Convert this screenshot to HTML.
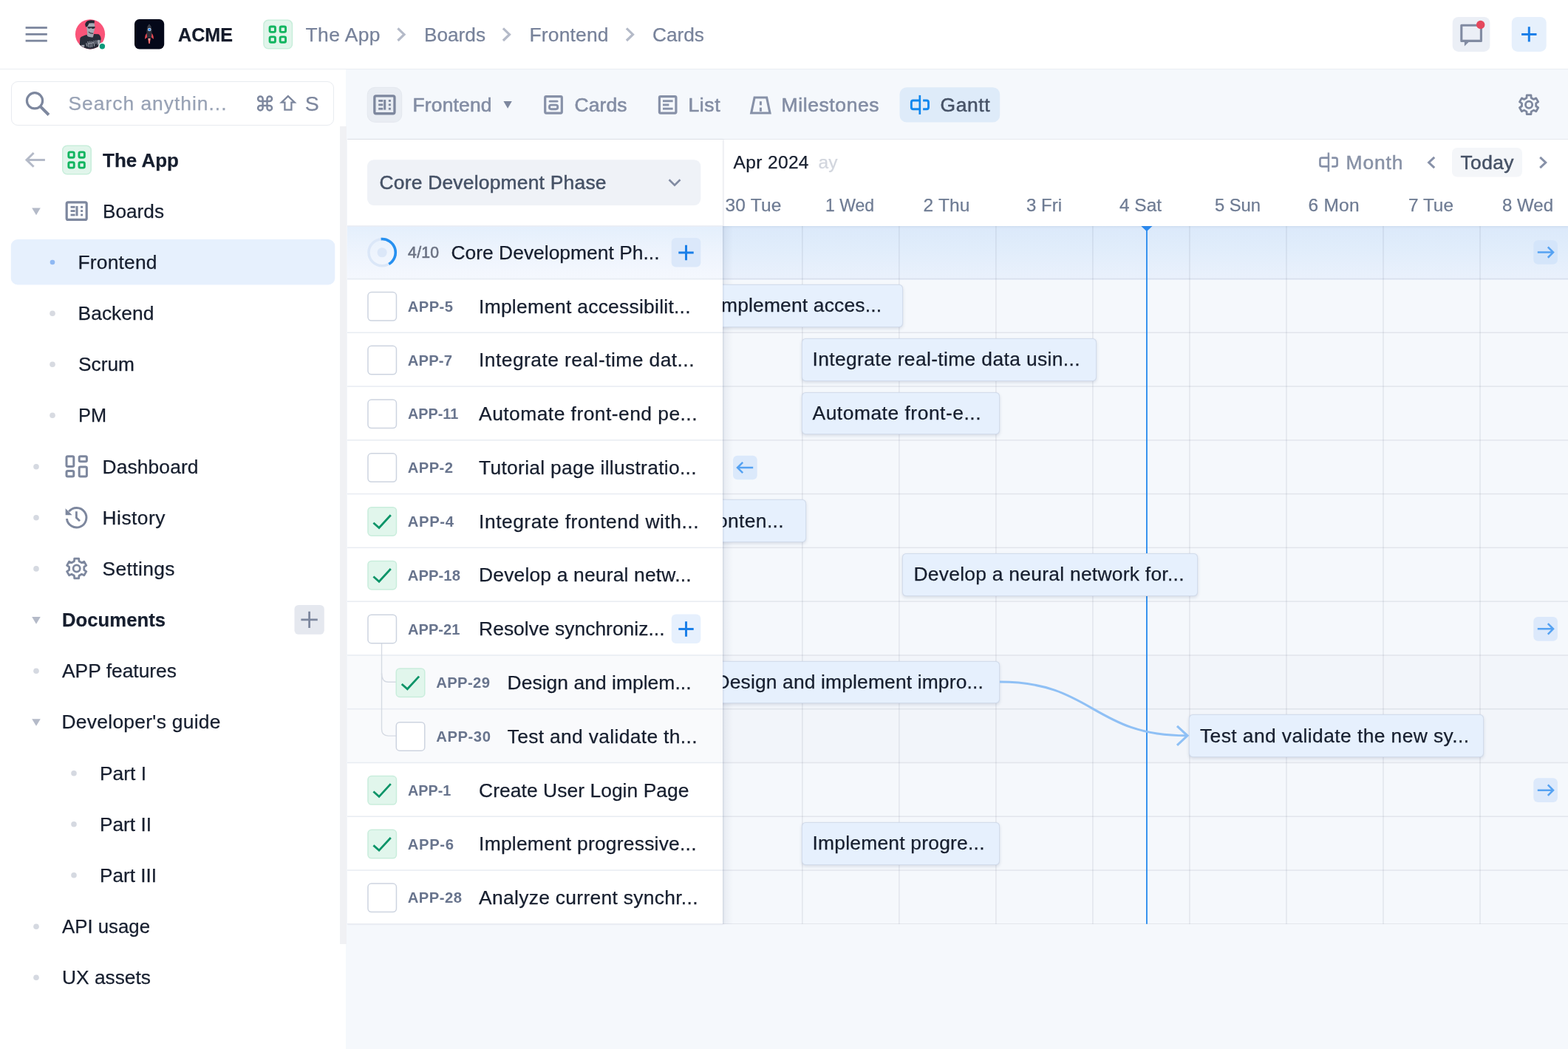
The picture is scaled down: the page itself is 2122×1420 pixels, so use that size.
<!DOCTYPE html>
<html lang="en"><head><meta charset="utf-8"><title>The App - Frontend - Gantt</title>
<style>
html,body{margin:0;padding:0;}
body{width:2122px;height:1420px;overflow:hidden;position:relative;background:#f5f8fc;font-family:'Liberation Sans',sans-serif;}
.t{position:absolute;white-space:pre;font-size:26px;line-height:40px;-webkit-text-stroke:0.25px currentColor;}
#root{position:absolute;left:0;top:0;width:2122px;height:1420px;will-change:transform;}
.a{position:absolute;}
svg{position:absolute;overflow:visible;}
</style></head><body><div id="root">
<nav aria-label="Sidebar">
<div style="position:absolute;left:0.00px;top:94.00px;width:468.00px;height:1326.00px;background:#fff;"></div>
<div style="position:absolute;left:460.00px;top:171.00px;width:8.50px;height:1107.00px;background:#f0f1f4;"></div>
<div style="position:absolute;left:15.30px;top:109.60px;width:436.40px;height:60.40px;box-sizing:border-box;border:1.5px solid #e8ebf0;border-radius:9px;background:#fff;"></div>
<svg width="2122" height="1420" viewBox="0 0 2122 1420" style="left:0;top:0" fill="none"><path d="M355.60 137.00 V133.75 A3.25 3.25 0 1 0 352.35 137.00 H355.60 M355.60 142.90 V146.15 A3.25 3.25 0 1 1 352.35 142.90 H355.60 M361.50 137.00 V133.75 A3.25 3.25 0 1 1 364.75 137.00 H361.50 M361.50 142.90 V146.15 A3.25 3.25 0 1 0 364.75 142.90 H361.50 M355.60 137.00 H361.50 V142.90 H355.60 Z" stroke="#7d879e" stroke-width="2.5"/><path d="M389.85 130.2 L398.7 138.6 H394.4 V148.6 H385.4 V138.6 H381 Z" stroke="#7d879e" stroke-width="2.3" stroke-linejoin="miter"/><circle cx="47" cy="136.3" r="10.6" stroke="#7d879e" stroke-width="3.2"/><path d="M54.6 144.2 L66 155.5" stroke="#7d879e" stroke-width="4"/><path d="M60.9 216.4 H36 M45.6 207 L36 216.4 L45.6 225.8" stroke="#b4bac8" stroke-width="3" stroke-linejoin="miter"/><rect x="84.75" y="197.25" width="38.5" height="38.5" rx="6" fill="#e1f5eb" stroke="#c8eedb" stroke-width="1.5"/><rect x="92.85" y="205.85" width="7.40" height="7.40" rx="1.8" stroke="#12b560" stroke-width="2.9"/><rect x="106.95" y="205.85" width="7.40" height="7.40" rx="1.8" stroke="#12b560" stroke-width="2.9"/><rect x="92.85" y="219.75" width="7.40" height="7.40" rx="1.8" stroke="#12b560" stroke-width="2.9"/><rect x="106.95" y="219.75" width="7.40" height="7.40" rx="1.8" stroke="#12b560" stroke-width="2.9"/><path d="M43.20 281.45 h11.6 l-5.80 9.7 Z" fill="#b4bac8"/><rect x="90.20" y="273.80" width="27.00" height="23.60" rx="2" stroke="#7d879e" stroke-width="3.2"/><rect x="95.55" y="278.84" width="6.04" height="2.8" fill="#7d879e"/><rect x="109.14" y="278.84" width="3.02" height="2.8" fill="#7d879e"/><rect x="95.55" y="284.20" width="6.04" height="2.8" fill="#7d879e"/><rect x="109.14" y="284.20" width="3.02" height="2.8" fill="#7d879e"/><rect x="95.55" y="289.56" width="6.04" height="2.8" fill="#7d879e"/><rect x="109.14" y="289.56" width="3.02" height="2.8" fill="#7d879e"/><rect x="102.50" y="278.90" width="3" height="13.40" fill="#7d879e"/><rect x="14.8" y="324" width="438.5" height="61.5" rx="9" fill="#e6f0fd"/><circle cx="71" cy="355" r="3.3" fill="#8fb9f3"/><circle cx="71" cy="424.3" r="3.8" fill="#d7dae1"/><circle cx="71" cy="493.3" r="3.8" fill="#d7dae1"/><circle cx="71" cy="562.3" r="3.8" fill="#d7dae1"/><circle cx="49" cy="631.7" r="3.8" fill="#d5d9e1"/><circle cx="49" cy="700.8000000000001" r="3.8" fill="#d5d9e1"/><circle cx="49" cy="769.9000000000001" r="3.8" fill="#d5d9e1"/><circle cx="49" cy="908.2" r="3.8" fill="#d5d9e1"/><circle cx="49" cy="1254.2" r="3.8" fill="#d5d9e1"/><circle cx="49" cy="1323.2" r="3.8" fill="#d5d9e1"/><circle cx="100" cy="1046.8" r="3.8" fill="#d5d9e1"/><circle cx="100" cy="1115.8" r="3.8" fill="#d5d9e1"/><circle cx="100" cy="1184.8" r="3.8" fill="#d5d9e1"/><path d="M43.20 834.95 h11.6 l-5.80 9.7 Z" fill="#b4bac8"/><path d="M43.20 973.15 h11.6 l-5.80 9.7 Z" fill="#b4bac8"/><rect x="90.00" y="617.80" width="9.80" height="13.70" rx="1.8" stroke="#7d879e" stroke-width="3"/><rect x="107.20" y="617.80" width="10.20" height="7.00" rx="1.8" stroke="#7d879e" stroke-width="3"/><rect x="90.00" y="637.60" width="9.80" height="7.40" rx="1.8" stroke="#7d879e" stroke-width="3"/><rect x="107.20" y="632.00" width="10.20" height="13.00" rx="1.8" stroke="#7d879e" stroke-width="3"/><path d="M93.22 692.41 A13.3 13.3 0 1 1 90.40 702.10" stroke="#7d879e" stroke-width="3"/><path d="M88.6 688.3 V697.2 H97.6 Z" fill="#7d879e"/><path d="M103.4 692.3 V700.8 L108 705.2" stroke="#7d879e" stroke-width="2.8"/><path d="M100.43 759.73 L100.73 756.12 L106.67 756.12 L106.97 759.73 L110.52 761.79 L113.80 760.24 L116.77 765.38 L113.79 767.45 L113.79 771.55 L116.77 773.62 L113.80 778.76 L110.52 777.21 L106.97 779.27 L106.67 782.88 L100.73 782.88 L100.43 779.27 L96.88 777.21 L93.60 778.76 L90.63 773.62 L93.61 771.55 L93.61 767.45 L90.63 765.38 L93.60 760.24 L96.88 761.79Z" stroke="#7d879e" stroke-width="2.8" stroke-linejoin="round"/><circle cx="103.7" cy="769.5" r="4.6" stroke="#7d879e" stroke-width="2.8"/><rect x="398.5" y="819" width="40.3" height="39.8" rx="5.5" fill="#e5e8ef"/><path d="M407.40 838.90 h22.4 M418.60 827.70 v22.4" stroke="#7d879e" stroke-width="2.8"/></svg>
<div class="t" style="top:120.00px;font-size:26.4px;line-height:40px;color:#98a2b5;letter-spacing:0.997px;left:92.50px;">Search anythin...</div>
<div class="t" style="top:120.00px;font-size:28.5px;line-height:40px;color:#7d879e;letter-spacing:0.000px;left:412.80px;">S</div>
<div class="t" style="top:197.00px;font-size:26.4px;line-height:40px;color:#161e2e;letter-spacing:0.000px;transform:scaleX(0.9849);transform-origin:0 0;font-weight:700;left:138.50px;">The App</div>
<div class="t" style="top:266.00px;font-size:26.4px;line-height:40px;color:#161e2e;letter-spacing:0.000px;transform:scaleX(0.9925);transform-origin:0 0;left:138.50px;">Boards</div>
<div class="t" style="top:335.00px;font-size:26.4px;line-height:40px;color:#161e2e;letter-spacing:0.194px;left:105.50px;">Frontend</div>
<div class="t" style="top:404.00px;font-size:26.4px;line-height:40px;color:#161e2e;letter-spacing:0.049px;left:105.50px;">Backend</div>
<div class="t" style="top:473.00px;font-size:26.4px;line-height:40px;color:#161e2e;letter-spacing:0.000px;transform:scaleX(0.9967);transform-origin:0 0;left:105.50px;">Scrum</div>
<div class="t" style="top:542.00px;font-size:26.4px;line-height:40px;color:#161e2e;letter-spacing:0.000px;transform:scaleX(0.9597);transform-origin:0 0;left:105.50px;">PM</div>
<div class="t" style="top:612.00px;font-size:26.4px;line-height:40px;color:#161e2e;letter-spacing:0.111px;left:138.50px;">Dashboard</div>
<div class="t" style="top:681.00px;font-size:26.4px;line-height:40px;color:#161e2e;letter-spacing:0.479px;left:138.50px;">History</div>
<div class="t" style="top:750.00px;font-size:26.4px;line-height:40px;color:#161e2e;letter-spacing:0.377px;left:138.50px;">Settings</div>
<div class="t" style="top:819.00px;font-size:26.4px;line-height:40px;color:#161e2e;letter-spacing:0.000px;transform:scaleX(0.9741);transform-origin:0 0;font-weight:700;left:83.50px;">Documents</div>
<div class="t" style="top:888.00px;font-size:26.4px;line-height:40px;color:#161e2e;letter-spacing:0.000px;transform:scaleX(0.9998);transform-origin:0 0;left:83.50px;">APP features</div>
<div class="t" style="top:957.00px;font-size:26.4px;line-height:40px;color:#161e2e;letter-spacing:0.285px;left:83.50px;">Developer&#x27;s guide</div>
<div class="t" style="top:1027.00px;font-size:26.4px;line-height:40px;color:#161e2e;letter-spacing:0.000px;transform:scaleX(0.9988);transform-origin:0 0;left:134.50px;">Part I</div>
<div class="t" style="top:1096.00px;font-size:26.4px;line-height:40px;color:#161e2e;letter-spacing:0.000px;transform:scaleX(0.9942);transform-origin:0 0;left:134.50px;">Part II</div>
<div class="t" style="top:1165.00px;font-size:26.4px;line-height:40px;color:#161e2e;letter-spacing:0.000px;transform:scaleX(0.9906);transform-origin:0 0;left:134.50px;">Part III</div>
<div class="t" style="top:1234.00px;font-size:26.4px;line-height:40px;color:#161e2e;letter-spacing:0.000px;transform:scaleX(0.9772);transform-origin:0 0;left:83.50px;">API usage</div>
<div class="t" style="top:1303.00px;font-size:26.4px;line-height:40px;color:#161e2e;letter-spacing:0.000px;transform:scaleX(0.9978);transform-origin:0 0;left:83.50px;">UX assets</div>
</nav>
<header>
<div style="position:absolute;left:0.00px;top:0.00px;width:2122.00px;height:92.60px;background:#fff;border-bottom:1.5px solid #eaedf2;"></div>
<svg width="2122" height="1420" viewBox="0 0 2122 1420" style="left:0;top:0" fill="none"><rect x="34.6" y="36.1" width="29.2" height="2.8" fill="#7d879e"/><rect x="34.6" y="45.0" width="29.2" height="2.8" fill="#7d879e"/><rect x="34.6" y="53.800000000000004" width="29.2" height="2.8" fill="#7d879e"/><clipPath id="av"><circle cx="122" cy="46.3" r="20.1"/></clipPath><circle cx="122" cy="46.3" r="20.1" fill="#fa5479"/><g clip-path="url(#av)"><g transform="translate(95,20) scale(0.03873)"><path d="M330 1060 L345 820 Q360 770 450 745 L570 700 L640 760 L790 780 L830 670 L990 680 Q1060 720 1075 830 L1060 960 L1000 1250 L330 1250 Z" fill="#272c39"/><path d="M590 560 L820 600 L800 780 Q700 800 600 750 Z" fill="#a3a8b2"/><path d="M560 300 L840 280 L860 420 L840 560 Q800 650 740 650 Q640 640 590 560 Z" fill="#a6abb5"/><path d="M640 580 Q720 650 810 640 L800 670 Q700 680 640 610 Z" fill="#3a3f4b"/><path d="M520 340 Q530 250 620 205 Q720 175 850 200 L845 300 Q760 285 660 300 L610 400 L545 435 Z" fill="#222733"/><path d="M600 420 L870 410 L865 450 Q840 495 780 490 Q740 485 730 450 Q700 490 650 485 Q610 475 600 420 Z" fill="#2b303c"/><path d="M940 900 Q1000 860 1050 890 L1040 1000 L960 1060 Z" fill="#a3a8b2"/><path d="M380 1060 L500 1050 L490 1130 L420 1120 Z" fill="#a3a8b2"/><path d="M560 990 l30 110 M620 930 l20 200 M690 920 l10 220 M760 920 l0 210 M830 900 l10 200 M900 890 l0 130 M640 1010 l200 -40" stroke="#9a9fab" stroke-width="30" fill="none"/></g></g><circle cx="138.4" cy="62.7" r="5.3" fill="#fff"/><circle cx="138.4" cy="62.7" r="3.7" fill="#0b9a7b"/><rect x="182" y="26" width="40.2" height="40.4" rx="6.5" fill="#040819"/><path d="M202 32.5 C205.5 36 206 41 205.5 47 L204.8 51.5 H199.2 L198.5 47 C198 41 198.5 36 202 32.5 Z" fill="#2b2f3a"/><path d="M202 32.5 C203.5 34 204.3 35.5 204.8 37 H199.2 C199.7 35.5 200.5 34 202 32.5Z" fill="#3a3e4a"/><circle cx="202.2" cy="40" r="2.3" fill="#dfe7f2"/><circle cx="202.2" cy="40" r="1.5" fill="#1d84f0"/><path d="M198.6 45 C196.5 47 196 50 196.3 53 L199 50.5 Z" fill="#ef4b55"/><path d="M205.4 45 C207.5 47 208 50 207.7 53 L205 50.5 Z" fill="#ef4b55"/><path d="M200.2 52 H203.8 L202.8 58.5 L202 59.5 L201.2 58.5 Z" fill="#f26a6a"/><path d="M201.3 52 H202.7 L202 56 Z" fill="#ffd9d4"/><rect x="356.95" y="27.35" width="38.5" height="38.5" rx="6" fill="#e1f5eb" stroke="#c8eedb" stroke-width="1.5"/><rect x="365.05" y="35.95" width="7.40" height="7.40" rx="1.8" stroke="#12b560" stroke-width="2.9"/><rect x="379.15" y="35.95" width="7.40" height="7.40" rx="1.8" stroke="#12b560" stroke-width="2.9"/><rect x="365.05" y="49.85" width="7.40" height="7.40" rx="1.8" stroke="#12b560" stroke-width="2.9"/><rect x="379.15" y="49.85" width="7.40" height="7.40" rx="1.8" stroke="#12b560" stroke-width="2.9"/><path d="M538.40 38.40 L547.00 46.70 L538.40 55.00" stroke="#b4bac8" stroke-width="3.2" stroke-linejoin="miter"/><path d="M680.90 38.40 L689.50 46.70 L680.90 55.00" stroke="#b4bac8" stroke-width="3.2" stroke-linejoin="miter"/><path d="M847.90 38.40 L856.50 46.70 L847.90 55.00" stroke="#b4bac8" stroke-width="3.2" stroke-linejoin="miter"/><rect x="1965.7" y="22.9" width="50.7" height="47" rx="8" fill="#ebeff6"/><path d="M1977.8 34.3 H2004.4 V55.4 H1984.5 L1982.3 55.4 L1977.8 55.4 Z" stroke="#818ba2" stroke-width="3.1" stroke-linejoin="round"/><path d="M1981.9 56 H1988.6 L1981.9 62.6 Z" fill="#818ba2"/><circle cx="2003.7" cy="33.5" r="5.7" fill="#e5485d"/><rect x="2045.8" y="22.9" width="46.9" height="47" rx="8" fill="#e6f0fc"/><path d="M2059.10 46.40 h20.4 M2069.30 36.20 v20.4" stroke="#1a7fe8" stroke-width="3.0"/></svg>
<div class="t" style="top:27.00px;font-size:26.4px;line-height:40px;color:#141b2b;letter-spacing:0.000px;transform:scaleX(0.9523);transform-origin:0 0;font-weight:700;left:240.50px;">ACME</div>
<div class="t" style="top:27.00px;font-size:26.4px;line-height:40px;color:#77829a;letter-spacing:0.448px;left:413.50px;">The App</div>
<div class="t" style="top:27.00px;font-size:26.4px;line-height:40px;color:#77829a;letter-spacing:0.000px;transform:scaleX(0.9925);transform-origin:0 0;left:573.50px;">Boards</div>
<div class="t" style="top:27.00px;font-size:26.4px;line-height:40px;color:#77829a;letter-spacing:0.194px;left:716.50px;">Frontend</div>
<div class="t" style="top:27.00px;font-size:26.4px;line-height:40px;color:#77829a;letter-spacing:0.000px;transform:scaleX(0.9942);transform-origin:0 0;left:882.50px;">Cards</div>
</header>
<main>
<section aria-label="Views">
<div style="position:absolute;left:470.00px;top:187.50px;width:1652.00px;height:1.50px;background:#e6e9ee;"></div>
<svg width="2122" height="1420" viewBox="0 0 2122 1420" style="left:0;top:0" fill="none"><rect x="497.2" y="118.4" width="46.5" height="46.9" rx="10" fill="#e9edf3" stroke="#e3e7ee" stroke-width="1"/><rect x="506.85" y="129.95" width="27.10" height="23.80" rx="2" stroke="#7d879e" stroke-width="3.3"/><rect x="512.19" y="135.03" width="6.08" height="2.8" fill="#7d879e"/><rect x="525.87" y="135.03" width="3.04" height="2.8" fill="#7d879e"/><rect x="512.19" y="140.45" width="6.08" height="2.8" fill="#7d879e"/><rect x="525.87" y="140.45" width="3.04" height="2.8" fill="#7d879e"/><rect x="512.19" y="145.87" width="6.08" height="2.8" fill="#7d879e"/><rect x="525.87" y="145.87" width="3.04" height="2.8" fill="#7d879e"/><rect x="519.20" y="135.08" width="3" height="13.55" fill="#7d879e"/><path d="M681.40 137.05 h11.4 l-5.70 9.7 Z" fill="#7d879e"/><rect x="737.7" y="130.7" width="22.6" height="22.4" rx="1.5" stroke="#8791a8" stroke-width="3.2"/><rect x="742.7" y="135.7" width="12.8" height="2.9" rx="1.4" fill="#8791a8"/><rect x="743.5" y="142.1" width="11.2" height="5.6" rx="2.4" stroke="#8791a8" stroke-width="2.9"/><rect x="892.4" y="130.7" width="22.5" height="22.4" rx="1.5" stroke="#8791a8" stroke-width="3.2"/><rect x="897.0" y="135.29999999999998" width="13.6" height="2.9" fill="#8791a8"/><rect x="897.0" y="140.5" width="8.4" height="2.9" fill="#8791a8"/><rect x="897.0" y="145.7" width="13.6" height="2.9" fill="#8791a8"/><path d="M1021.0999999999999 132.0 H1037.6 L1042.0 153.0 H1016.6999999999999 Z" stroke="#8791a8" stroke-width="3.1" stroke-linejoin="miter"/><rect x="1027.8999999999999" y="137.20000000000002" width="3" height="5.2" fill="#8791a8"/><rect x="1027.8999999999999" y="145.6" width="3" height="5.2" fill="#8791a8"/><rect x="1217.5" y="118.3" width="135.7" height="47.2" rx="9.5" fill="#deebf9"/><path d="M1244.80 128.90 V154.90" stroke="#1288ee" stroke-width="2.6999999999999997"/><path d="M1244.80 136.05 H1235.85 Q1233.35 136.05 1233.35 138.55 V145.25 Q1233.35 147.75 1235.85 147.75 H1244.80" stroke="#1288ee" stroke-width="2.9"/><path d="M1249.10 136.05 H1254.00 Q1256.50 136.05 1256.50 138.55 V145.25 Q1256.50 147.75 1254.00 147.75 H1249.10" stroke="#1288ee" stroke-width="2.9"/><path d="M2065.99 132.51 L2066.24 128.91 L2071.96 128.91 L2072.21 132.51 L2075.59 134.46 L2078.83 132.88 L2081.69 137.83 L2078.70 139.85 L2078.70 143.75 L2081.69 145.77 L2078.83 150.72 L2075.59 149.14 L2072.21 151.09 L2071.96 154.69 L2066.24 154.69 L2065.99 151.09 L2062.61 149.14 L2059.37 150.72 L2056.51 145.77 L2059.50 143.75 L2059.50 139.85 L2056.51 137.83 L2059.37 132.88 L2062.61 134.46Z" stroke="#7d879e" stroke-width="2.8" stroke-linejoin="round"/><circle cx="2069.1" cy="141.8" r="4.6" stroke="#7d879e" stroke-width="2.8"/></svg>
<div class="t" style="top:122.00px;font-size:26.4px;line-height:40px;color:#838da4;letter-spacing:0.194px;left:558.50px;-webkit-text-stroke:0.6px #838da4;">Frontend</div>
<div class="t" style="top:122.00px;font-size:26.4px;line-height:40px;color:#838da4;letter-spacing:0.148px;left:777.50px;-webkit-text-stroke:0.6px #838da4;">Cards</div>
<div class="t" style="top:122.00px;font-size:26.4px;line-height:40px;color:#838da4;letter-spacing:0.641px;left:931.50px;-webkit-text-stroke:0.6px #838da4;">List</div>
<div class="t" style="top:122.00px;font-size:26.4px;line-height:40px;color:#838da4;letter-spacing:0.649px;left:1057.50px;-webkit-text-stroke:0.6px #838da4;">Milestones</div>
<div class="t" style="top:122.00px;font-size:26.4px;line-height:40px;color:#465266;letter-spacing:0.613px;left:1272.50px;-webkit-text-stroke:0.5px #465266;">Gantt</div>
</section>
<section aria-label="Gantt chart">
<div class="a" style="left:978px;top:189px;width:1144px;height:1061.80px;overflow:hidden;">
<div class="a" style="left:-978px;top:-189px;width:2122px;height:1420px;">
<div style="position:absolute;left:978.00px;top:306.00px;width:1144.00px;height:944.80px;background:#f5f8fc;"></div>
<div style="position:absolute;left:978.00px;top:306.00px;width:1144.00px;height:72.78px;background:linear-gradient(180deg,#dbe9fa 0%,#e1edfb 45%,#eaf1fc 100%);"></div>
<div style="position:absolute;left:978.00px;top:886.93px;width:1144.00px;height:145.55px;background:#f2f5fa;"></div>
<svg width="2122" height="1420" viewBox="0 0 2122 1420" style="left:0;top:0" fill="none"><rect x="978.00" y="376.75" width="1144.00" height="1.5" fill="rgba(80,90,115,0.115)"/><rect x="978.00" y="449.52" width="1144.00" height="1.5" fill="rgba(80,90,115,0.115)"/><rect x="978.00" y="522.30" width="1144.00" height="1.5" fill="rgba(80,90,115,0.115)"/><rect x="978.00" y="595.08" width="1144.00" height="1.5" fill="rgba(80,90,115,0.115)"/><rect x="978.00" y="667.85" width="1144.00" height="1.5" fill="rgba(80,90,115,0.115)"/><rect x="978.00" y="740.62" width="1144.00" height="1.5" fill="rgba(80,90,115,0.115)"/><rect x="978.00" y="813.40" width="1144.00" height="1.5" fill="rgba(80,90,115,0.115)"/><rect x="978.00" y="886.18" width="1144.00" height="1.5" fill="rgba(80,90,115,0.115)"/><rect x="978.00" y="958.95" width="1144.00" height="1.5" fill="rgba(80,90,115,0.115)"/><rect x="978.00" y="1031.72" width="1144.00" height="1.5" fill="rgba(80,90,115,0.115)"/><rect x="978.00" y="1104.50" width="1144.00" height="1.5" fill="rgba(80,90,115,0.115)"/><rect x="978.00" y="1177.28" width="1144.00" height="1.5" fill="rgba(80,90,115,0.115)"/><rect x="978.00" y="1250.05" width="1144.00" height="1.5" fill="rgba(80,90,115,0.115)"/><rect x="1085.05" y="306.00" width="1.5" height="944.80" fill="rgba(80,90,115,0.115)"/><rect x="1216.08" y="306.00" width="1.5" height="944.80" fill="rgba(80,90,115,0.115)"/><rect x="1347.11" y="306.00" width="1.5" height="944.80" fill="rgba(80,90,115,0.115)"/><rect x="1478.14" y="306.00" width="1.5" height="944.80" fill="rgba(80,90,115,0.115)"/><rect x="1609.17" y="306.00" width="1.5" height="944.80" fill="rgba(80,90,115,0.115)"/><rect x="1740.20" y="306.00" width="1.5" height="944.80" fill="rgba(80,90,115,0.115)"/><rect x="1871.23" y="306.00" width="1.5" height="944.80" fill="rgba(80,90,115,0.115)"/><rect x="2002.26" y="306.00" width="1.5" height="944.80" fill="rgba(80,90,115,0.115)"/><rect x="1551.0" y="306.00" width="1.9" height="944.80" fill="#2f8eee"/><path d="M1544.3 306.00 H1559.5 L1551.9 313.20 Z" fill="#2a8af0"/></svg>
<div style="position:absolute;left:978.00px;top:306.00px;width:14.00px;height:944.80px;background:linear-gradient(90deg,rgba(100,116,150,0.10),rgba(100,116,150,0));"></div>
<div style="position:absolute;left:953.60px;top:385.19px;width:268.10px;height:57.60px;box-sizing:border-box;background:#e6f0fd;border:1.2px solid rgba(110,125,155,0.17);border-radius:5.5px;box-shadow:0 2px 4px rgba(50,70,110,0.15),0 0 1px rgba(50,70,110,0.08);"></div>
<div style="position:absolute;left:1084.60px;top:457.96px;width:399.60px;height:57.60px;box-sizing:border-box;background:#e6f0fd;border:1.2px solid rgba(110,125,155,0.17);border-radius:5.5px;box-shadow:0 2px 4px rgba(50,70,110,0.15),0 0 1px rgba(50,70,110,0.08);"></div>
<div style="position:absolute;left:1084.60px;top:530.74px;width:268.60px;height:57.60px;box-sizing:border-box;background:#e6f0fd;border:1.2px solid rgba(110,125,155,0.17);border-radius:5.5px;box-shadow:0 2px 4px rgba(50,70,110,0.15),0 0 1px rgba(50,70,110,0.08);"></div>
<div style="position:absolute;left:822.60px;top:676.29px;width:268.20px;height:57.60px;box-sizing:border-box;background:#e6f0fd;border:1.2px solid rgba(110,125,155,0.17);border-radius:5.5px;box-shadow:0 2px 4px rgba(50,70,110,0.15),0 0 1px rgba(50,70,110,0.08);"></div>
<div style="position:absolute;left:1221.20px;top:749.06px;width:399.70px;height:57.60px;box-sizing:border-box;background:#e6f0fd;border:1.2px solid rgba(110,125,155,0.17);border-radius:5.5px;box-shadow:0 2px 4px rgba(50,70,110,0.15),0 0 1px rgba(50,70,110,0.08);"></div>
<div style="position:absolute;left:953.60px;top:894.61px;width:399.60px;height:57.60px;box-sizing:border-box;background:#e6f0fd;border:1.2px solid rgba(110,125,155,0.17);border-radius:5.5px;box-shadow:0 2px 4px rgba(50,70,110,0.15),0 0 1px rgba(50,70,110,0.08);"></div>
<div style="position:absolute;left:1609.00px;top:967.39px;width:399.20px;height:57.60px;box-sizing:border-box;background:#e6f0fd;border:1.2px solid rgba(110,125,155,0.17);border-radius:5.5px;box-shadow:0 2px 4px rgba(50,70,110,0.15),0 0 1px rgba(50,70,110,0.08);"></div>
<div style="position:absolute;left:1084.60px;top:1112.94px;width:268.60px;height:57.60px;box-sizing:border-box;background:#e6f0fd;border:1.2px solid rgba(110,125,155,0.17);border-radius:5.5px;box-shadow:0 2px 4px rgba(50,70,110,0.15),0 0 1px rgba(50,70,110,0.08);"></div>
<svg width="2122" height="1420" viewBox="0 0 2122 1420" style="left:0;top:0" fill="none"><path d="M1353 923.01 C1479 923.01 1479 995.79 1606 995.79" stroke="#8fc0f5" stroke-width="3.1"/><path d="M1593 982.79 L1607 995.79 L1593 1008.79" stroke="#8fc0f5" stroke-width="3.1"/><rect x="2075.3" y="325.25" width="32.6" height="32.6" rx="6" fill="#d4e5fa"/><path d="M2080.80 341.55 H2102.00 M2094.80 334.35 L2102.00 341.55 L2094.80 348.75" stroke="#55a2f2" stroke-width="2.5"/><rect x="2075.3" y="835.04" width="32.6" height="32.6" rx="6" fill="#dce9fb"/><path d="M2080.80 851.34 H2102.00 M2094.80 844.14 L2102.00 851.34 L2094.80 858.54" stroke="#55a2f2" stroke-width="2.5"/><rect x="2075.3" y="1053.36" width="32.6" height="32.6" rx="6" fill="#dce9fb"/><path d="M2080.80 1069.66 H2102.00 M2094.80 1062.46 L2102.00 1069.66 L2094.80 1076.86" stroke="#55a2f2" stroke-width="2.5"/><rect x="992" y="616.71" width="32.7" height="32.6" rx="6" fill="#dbe9fb"/><path d="M1019.20 633.01 H998.00 M1005.20 625.81 L998.00 633.01 L1005.20 640.21" stroke="#55a2f2" stroke-width="2.5"/></svg>
<div class="t" style="top:393.44px;font-size:26.4px;line-height:40px;color:#161e2e;letter-spacing:0.183px;left:968.50px;">Implement acces...</div>
<div class="t" style="top:466.21px;font-size:26.4px;line-height:40px;color:#161e2e;letter-spacing:0.368px;left:1099.50px;">Integrate real-time data usin...</div>
<div class="t" style="top:538.99px;font-size:26.4px;line-height:40px;color:#161e2e;letter-spacing:0.524px;left:1099.50px;">Automate front-e...</div>
<div class="t" style="top:684.54px;font-size:26.4px;line-height:40px;color:#161e2e;letter-spacing:0.396px;left:837.50px;">Integrate fronten...</div>
<div class="t" style="top:757.31px;font-size:26.4px;line-height:40px;color:#161e2e;letter-spacing:0.269px;left:1236.50px;">Develop a neural network for...</div>
<div class="t" style="top:902.86px;font-size:26.4px;line-height:40px;color:#161e2e;letter-spacing:0.157px;left:968.50px;">Design and implement impro...</div>
<div class="t" style="top:975.64px;font-size:26.4px;line-height:40px;color:#161e2e;letter-spacing:0.417px;left:1624.00px;">Test and validate the new sy...</div>
<div class="t" style="top:1121.19px;font-size:26.4px;line-height:40px;color:#161e2e;letter-spacing:0.232px;left:1099.50px;">Implement progre...</div>
<div style="position:absolute;left:978.00px;top:189.00px;width:1144.00px;height:117.00px;background:#fff;box-shadow:0 1px 3px rgba(60,80,120,0.10);"></div>
<svg width="2122" height="1420" viewBox="0 0 2122 1420" style="left:0;top:0" fill="none"><path d="M1797.90 206.50 V232.50" stroke="#8791a8" stroke-width="2.5"/><path d="M1797.90 213.65 H1788.95 Q1786.45 213.65 1786.45 216.15 V222.85 Q1786.45 225.35 1788.95 225.35 H1797.90" stroke="#8791a8" stroke-width="2.7"/><path d="M1802.20 213.65 H1807.10 Q1809.60 213.65 1809.60 216.15 V222.85 Q1809.60 225.35 1807.10 225.35 H1802.20" stroke="#8791a8" stroke-width="2.7"/><rect x="1965" y="200" width="95" height="39.5" rx="7" fill="#f4f6f9"/><path d="M1941.2 212.8 L1933.6 220 L1941.2 227.2" stroke="#8791a8" stroke-width="3"/><path d="M2084.2 212.8 L2091.8 220 L2084.2 227.2" stroke="#8791a8" stroke-width="3"/></svg>
<div class="t" style="top:200.00px;font-size:24.5px;line-height:40px;color:#161e2e;letter-spacing:0.366px;left:992.50px;">Apr 2024</div>
<div class="t" style="top:200.00px;font-size:24.5px;line-height:40px;color:#d2d6de;letter-spacing:0.000px;left:1107.50px;">ay</div>
<div class="t" style="top:258.00px;font-size:24.5px;line-height:40px;color:#6e7b93;letter-spacing:0.212px;left:981.50px;">30 Tue</div>
<div class="t" style="top:258.00px;font-size:24.5px;line-height:40px;color:#6e7b93;letter-spacing:0.000px;transform:scaleX(0.9378);transform-origin:0 0;left:1116.50px;">1 Wed</div>
<div class="t" style="top:258.00px;font-size:24.5px;line-height:40px;color:#6e7b93;letter-spacing:0.195px;left:1249.50px;">2 Thu</div>
<div class="t" style="top:258.00px;font-size:24.5px;line-height:40px;color:#6e7b93;letter-spacing:0.000px;transform:scaleX(0.9796);transform-origin:0 0;left:1388.50px;">3 Fri</div>
<div class="t" style="top:258.00px;font-size:24.5px;line-height:40px;color:#6e7b93;letter-spacing:0.000px;transform:scaleX(0.9962);transform-origin:0 0;left:1514.50px;">4 Sat</div>
<div class="t" style="top:258.00px;font-size:24.5px;line-height:40px;color:#6e7b93;letter-spacing:0.000px;transform:scaleX(0.9683);transform-origin:0 0;left:1643.50px;">5 Sun</div>
<div class="t" style="top:258.00px;font-size:24.5px;line-height:40px;color:#6e7b93;letter-spacing:0.227px;left:1770.50px;">6 Mon</div>
<div class="t" style="top:258.00px;font-size:24.5px;line-height:40px;color:#6e7b93;letter-spacing:0.000px;transform:scaleX(0.9949);transform-origin:0 0;left:1905.50px;">7 Tue</div>
<div class="t" style="top:258.00px;font-size:24.5px;line-height:40px;color:#6e7b93;letter-spacing:0.000px;transform:scaleX(0.9805);transform-origin:0 0;left:2032.50px;">8 Wed</div>
<div class="t" style="top:200.00px;font-size:26.4px;line-height:40px;color:#8892a6;letter-spacing:0.910px;left:1821.50px;-webkit-text-stroke:0.5px #8892a6;">Month</div>
<div class="t" style="top:200.00px;font-size:26.4px;line-height:40px;color:#465266;letter-spacing:0.395px;left:1976.50px;-webkit-text-stroke:0.5px #465266;">Today</div>
</div></div>
<div style="position:absolute;left:470.00px;top:189.00px;width:508.00px;height:1061.80px;background:#fff;box-shadow:1px 0 2px rgba(60,80,120,0.16);"></div>
<div style="position:absolute;left:470.00px;top:306.00px;width:508.00px;height:72.78px;background:linear-gradient(180deg,#e4effc 0%,#eef4fd 50%,#f5f8fe 100%);"></div>
<div style="position:absolute;left:470.00px;top:886.93px;width:508.00px;height:145.55px;background:#f9fafc;"></div>
<svg width="2122" height="1420" viewBox="0 0 2122 1420" style="left:0;top:0" fill="none"><rect x="470.00" y="305.25" width="508.00" height="1.5" fill="#e8ecf2"/><rect x="470.00" y="376.75" width="508.00" height="1.5" fill="#e8ecf2"/><rect x="470.00" y="449.52" width="508.00" height="1.5" fill="#e8ecf2"/><rect x="470.00" y="522.30" width="508.00" height="1.5" fill="#e8ecf2"/><rect x="470.00" y="595.08" width="508.00" height="1.5" fill="#e8ecf2"/><rect x="470.00" y="667.85" width="508.00" height="1.5" fill="#e8ecf2"/><rect x="470.00" y="740.62" width="508.00" height="1.5" fill="#e8ecf2"/><rect x="470.00" y="813.40" width="508.00" height="1.5" fill="#e8ecf2"/><rect x="470.00" y="886.18" width="508.00" height="1.5" fill="#e8ecf2"/><rect x="470.00" y="958.95" width="508.00" height="1.5" fill="#e8ecf2"/><rect x="470.00" y="1031.72" width="508.00" height="1.5" fill="#e8ecf2"/><rect x="470.00" y="1104.50" width="508.00" height="1.5" fill="#e8ecf2"/><rect x="470.00" y="1177.28" width="508.00" height="1.5" fill="#e8ecf2"/><rect x="470.00" y="1250.05" width="508.00" height="1.5" fill="#e8ecf2"/><rect x="497" y="216.2" width="451.3" height="61.9" rx="9" fill="#eff2f7"/><path d="M905.5 243.2 L913 250.6 L920.5 243.2" stroke="#818ba2" stroke-width="2.6"/><circle cx="517.1" cy="341.75" r="18.1" stroke="#dbe7f8" stroke-width="3.5"/><circle cx="517.1" cy="341.75" r="6.6" fill="#dbe7f8"/><path d="M515.65 323.61 A18.2 18.2 0 0 1 526.27 357.47" stroke="#2690f0" stroke-width="3.6"/><rect x="908.7" y="321.95" width="39.6" height="39.6" rx="6" fill="#dbe8fa"/><path d="M918.30 341.95 h20.4 M928.50 331.75 v20.4" stroke="#1a7fe8" stroke-width="3"/><rect x="908.7" y="831.44" width="39.6" height="39.6" rx="6" fill="#e6f0fd"/><path d="M918.30 851.44 h20.4 M928.50 841.24 v20.4" stroke="#1a7fe8" stroke-width="3"/><path d="M516.5 870.54 V987.09 Q516.5 996.09 525.5 996.09 H536.0" stroke="#d5dae3" stroke-width="1.4"/><path d="M516.5 911.31 Q516.5 923.31 525.5 923.31 H536.0" stroke="#d5dae3" stroke-width="1.4"/><rect x="497.95" y="395.54" width="38.5" height="38.5" rx="4.8" fill="#fff" stroke="#cdd4e0" stroke-width="1.5"/><rect x="497.95" y="468.31" width="38.5" height="38.5" rx="4.8" fill="#fff" stroke="#cdd4e0" stroke-width="1.5"/><rect x="497.95" y="541.09" width="38.5" height="38.5" rx="4.8" fill="#fff" stroke="#cdd4e0" stroke-width="1.5"/><rect x="497.95" y="613.86" width="38.5" height="38.5" rx="4.8" fill="#fff" stroke="#cdd4e0" stroke-width="1.5"/><rect x="497.95" y="686.64" width="38.5" height="38.5" rx="4.8" fill="#e1f6ec" stroke="#c9eddc" stroke-width="1.5"/><path d="M505.40 707.69 L513.00 714.49 L528.80 697.29" stroke="#0b9468" stroke-width="2.8"/><rect x="497.95" y="759.41" width="38.5" height="38.5" rx="4.8" fill="#e1f6ec" stroke="#c9eddc" stroke-width="1.5"/><path d="M505.40 780.46 L513.00 787.26 L528.80 770.06" stroke="#0b9468" stroke-width="2.8"/><rect x="497.95" y="832.19" width="38.5" height="38.5" rx="4.8" fill="#fff" stroke="#cdd4e0" stroke-width="1.5"/><rect x="536.25" y="904.96" width="38.5" height="38.5" rx="4.8" fill="#e1f6ec" stroke="#c9eddc" stroke-width="1.5"/><path d="M543.70 926.01 L551.30 932.81 L567.10 915.61" stroke="#0b9468" stroke-width="2.8"/><rect x="536.25" y="977.74" width="38.5" height="38.5" rx="4.8" fill="#fff" stroke="#cdd4e0" stroke-width="1.5"/><rect x="497.95" y="1050.51" width="38.5" height="38.5" rx="4.8" fill="#e1f6ec" stroke="#c9eddc" stroke-width="1.5"/><path d="M505.40 1071.56 L513.00 1078.36 L528.80 1061.16" stroke="#0b9468" stroke-width="2.8"/><rect x="497.95" y="1123.29" width="38.5" height="38.5" rx="4.8" fill="#e1f6ec" stroke="#c9eddc" stroke-width="1.5"/><path d="M505.40 1144.34 L513.00 1151.14 L528.80 1133.94" stroke="#0b9468" stroke-width="2.8"/><rect x="497.95" y="1196.06" width="38.5" height="38.5" rx="4.8" fill="#fff" stroke="#cdd4e0" stroke-width="1.5"/></svg>
<div class="t" style="top:227.00px;font-size:26.4px;line-height:40px;color:#465266;letter-spacing:0.228px;left:513.50px;-webkit-text-stroke:0.5px #465266;">Core Development Phase</div>
<div class="t" style="top:321.85px;font-size:21.2px;line-height:40px;color:#6b7283;letter-spacing:0.250px;left:552.10px;-webkit-text-stroke:0.6px #6b7283;">4/10</div>
<div class="t" style="top:321.75px;font-size:26.4px;line-height:40px;color:#161e2e;letter-spacing:0.017px;left:610.50px;">Core Development Ph...</div>
<div class="t" style="top:394.89px;font-size:20.3px;line-height:40px;color:#68748d;letter-spacing:0.387px;font-weight:700;left:551.70px;-webkit-text-stroke:0;">APP-5</div>
<div class="t" style="top:394.59px;font-size:26.4px;line-height:40px;color:#161e2e;letter-spacing:0.261px;left:648.10px;">Implement accessibilit...</div>
<div class="t" style="top:467.66px;font-size:20.3px;line-height:40px;color:#68748d;letter-spacing:0.137px;font-weight:700;left:551.70px;-webkit-text-stroke:0;">APP-7</div>
<div class="t" style="top:467.36px;font-size:26.4px;line-height:40px;color:#161e2e;letter-spacing:0.449px;left:648.10px;">Integrate real-time dat...</div>
<div class="t" style="top:540.44px;font-size:20.3px;line-height:40px;color:#68748d;letter-spacing:0.000px;transform:scaleX(0.9770);transform-origin:0 0;font-weight:700;left:551.70px;-webkit-text-stroke:0;">APP-11</div>
<div class="t" style="top:540.14px;font-size:26.4px;line-height:40px;color:#161e2e;letter-spacing:0.469px;left:648.10px;">Automate front-end pe...</div>
<div class="t" style="top:613.21px;font-size:20.3px;line-height:40px;color:#68748d;letter-spacing:0.387px;font-weight:700;left:551.70px;-webkit-text-stroke:0;">APP-2</div>
<div class="t" style="top:612.91px;font-size:26.4px;line-height:40px;color:#161e2e;letter-spacing:0.291px;left:648.10px;">Tutorial page illustratio...</div>
<div class="t" style="top:685.99px;font-size:20.3px;line-height:40px;color:#68748d;letter-spacing:0.637px;font-weight:700;left:551.70px;-webkit-text-stroke:0;">APP-4</div>
<div class="t" style="top:685.69px;font-size:26.4px;line-height:40px;color:#161e2e;letter-spacing:0.512px;left:648.10px;">Integrate frontend with...</div>
<div class="t" style="top:758.76px;font-size:20.3px;line-height:40px;color:#68748d;letter-spacing:0.057px;font-weight:700;left:551.70px;-webkit-text-stroke:0;">APP-18</div>
<div class="t" style="top:758.46px;font-size:26.4px;line-height:40px;color:#161e2e;letter-spacing:0.185px;left:648.10px;">Develop a neural netw...</div>
<div class="t" style="top:831.54px;font-size:20.3px;line-height:40px;color:#68748d;letter-spacing:0.000px;transform:scaleX(0.9899);transform-origin:0 0;font-weight:700;left:551.70px;-webkit-text-stroke:0;">APP-21</div>
<div class="t" style="top:831.24px;font-size:26.4px;line-height:40px;color:#161e2e;letter-spacing:0.029px;left:648.10px;">Resolve synchroniz...</div>
<div class="t" style="top:904.31px;font-size:20.3px;line-height:40px;color:#68748d;letter-spacing:0.357px;font-weight:700;left:590.20px;-webkit-text-stroke:0;">APP-29</div>
<div class="t" style="top:904.01px;font-size:26.4px;line-height:40px;color:#161e2e;letter-spacing:0.053px;left:686.60px;">Design and implem...</div>
<div class="t" style="top:977.09px;font-size:20.3px;line-height:40px;color:#68748d;letter-spacing:0.557px;font-weight:700;left:590.20px;-webkit-text-stroke:0;">APP-30</div>
<div class="t" style="top:976.79px;font-size:26.4px;line-height:40px;color:#161e2e;letter-spacing:0.341px;left:686.60px;">Test and validate th...</div>
<div class="t" style="top:1049.86px;font-size:20.3px;line-height:40px;color:#68748d;letter-spacing:0.000px;transform:scaleX(0.9757);transform-origin:0 0;font-weight:700;left:551.70px;-webkit-text-stroke:0;">APP-1</div>
<div class="t" style="top:1049.56px;font-size:26.4px;line-height:40px;color:#161e2e;letter-spacing:0.060px;left:648.10px;">Create User Login Page</div>
<div class="t" style="top:1122.64px;font-size:20.3px;line-height:40px;color:#68748d;letter-spacing:0.637px;font-weight:700;left:551.70px;-webkit-text-stroke:0;">APP-6</div>
<div class="t" style="top:1122.34px;font-size:26.4px;line-height:40px;color:#161e2e;letter-spacing:0.237px;left:648.10px;">Implement progressive...</div>
<div class="t" style="top:1195.41px;font-size:20.3px;line-height:40px;color:#68748d;letter-spacing:0.457px;font-weight:700;left:551.70px;-webkit-text-stroke:0;">APP-28</div>
<div class="t" style="top:1195.11px;font-size:26.4px;line-height:40px;color:#161e2e;letter-spacing:0.310px;left:648.10px;">Analyze current synchr...</div>
</section>
</main>
</div></body></html>
